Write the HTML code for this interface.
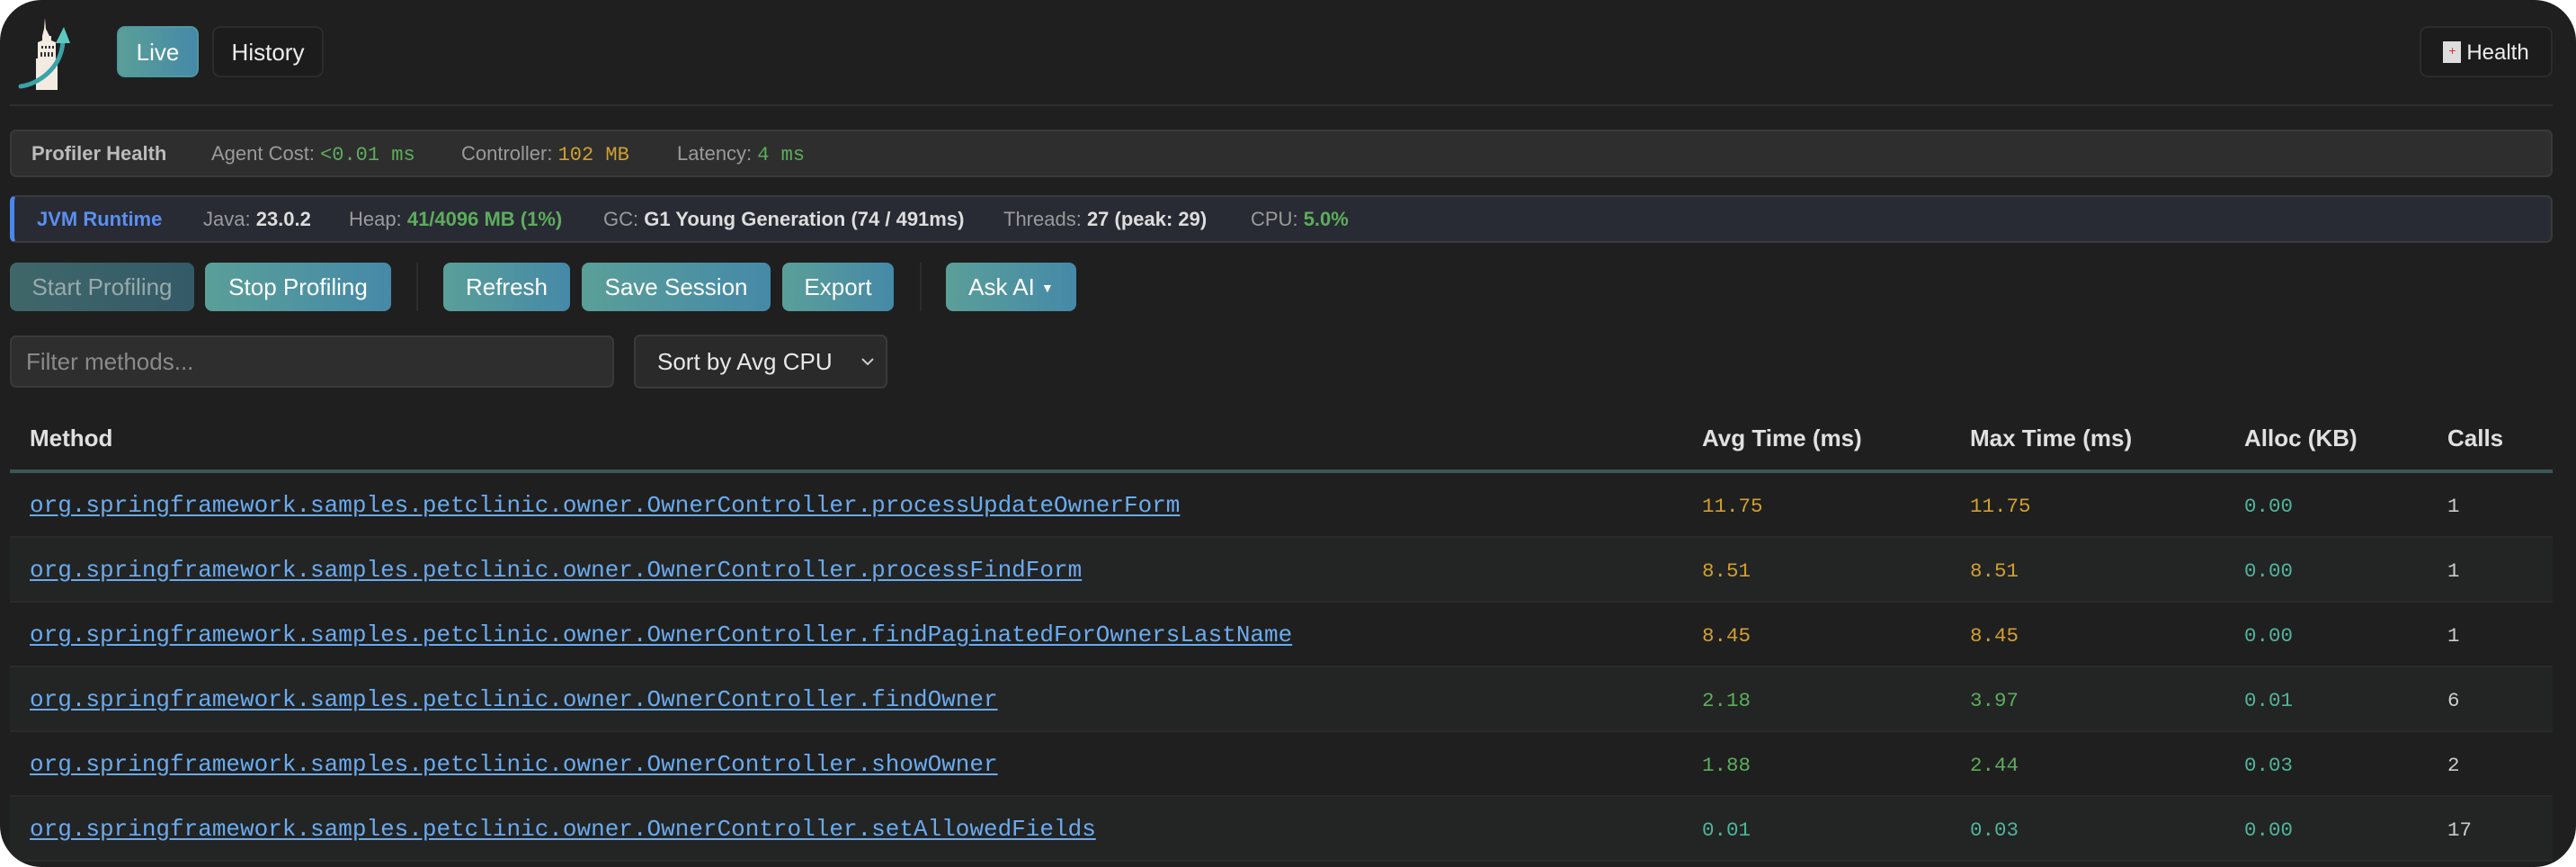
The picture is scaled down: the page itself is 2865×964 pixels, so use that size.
<!DOCTYPE html>
<html><head><meta charset="utf-8"><style>
*{box-sizing:border-box;margin:0;padding:0}
body{width:2865px;height:964px;background:#fff;overflow:hidden;font-family:"Liberation Sans",Arial,sans-serif}
#app{position:absolute;left:0;top:0;width:2865px;height:964px;background:#1f1f1f;border-radius:46px;overflow:hidden;color:#ddd}
.abs{position:absolute}
.tab{position:absolute;top:29px;height:57px;border-radius:9px;font-size:26px;line-height:55px;text-align:center;color:#eee;border:2px solid #2c2c2c}
.bar{position:absolute;left:11px;width:2828px;height:53px;border-radius:7px;border:2px solid #3a3a3a;font-size:22px;line-height:49px;color:#9a9a9a;white-space:nowrap}
.bar span{position:absolute;top:0}
.mono{font-family:"Liberation Mono",monospace}
.btn{position:absolute;top:292px;height:54px;border-radius:8px;background:linear-gradient(90deg,#5a9f98,#4589a8);color:#fff;font-size:26px;line-height:54px;text-align:center}
.sep{position:absolute;top:292px;width:2px;height:54px;background:#2c2c2c}
.hd{position:absolute;top:472px;font-size:26px;font-weight:bold;color:#e0e0e0}
.row{position:absolute;left:11px;width:2828px;height:72px;border-bottom:2px solid #2a2a2a}
.row a{position:absolute;left:22px;top:21px;font-family:"Liberation Mono",monospace;font-size:26px;color:#6aabf0;text-decoration:underline;text-underline-offset:3px}
.row i{position:absolute;top:24px;font-style:normal;font-family:"Liberation Mono",monospace;font-size:22.5px}
.o{color:#d0a030}.g{color:#5cad5c}.t{color:#4fb59a}.w{color:#ccc}
</style></head><body><div id="app">
<svg class="abs" style="left:18px;top:18px" width="62" height="86" viewBox="0 0 62 86">
<path d="M32 2 L33 14 L37 22 L39 22 L39 27 L44 29 L44 47 L46 47 L46 82 L22 82 L22 47 L24 47 L24 29 L29 27 L29 22 L31 14Z" fill="#f3ebe2"/>
<g fill="#333"><rect x="28" y="33" width="2" height="3"/><rect x="32" y="33" width="2" height="3"/><rect x="36" y="33" width="2" height="3"/><rect x="40" y="33" width="2" height="3"/><rect x="27" y="40" width="2" height="5"/><rect x="31" y="40" width="2" height="5"/><rect x="35" y="40" width="2" height="5"/><rect x="39" y="40" width="2" height="5"/></g>
<path d="M5 78 C22 76 50 60 52 28" stroke="#3aa3a8" stroke-width="5" fill="none" stroke-linecap="round"/>
<path d="M44 30 L53 12 L60 30Z" fill="#5cc8c0"/>
</svg>
<div class="tab" style="left:130px;width:91px;background:linear-gradient(90deg,#5a9f98,#4589a8);border-color:#4f97a0;color:#fff">Live</div>
<div class="tab" style="left:236px;width:124px;background:#1c1c1c">History</div>
<div class="tab" style="left:2691px;width:148px;background:#1c1c1c;font-size:24px"><span style="display:inline-block;width:20px;height:24px;background:#ddd;vertical-align:-4px;margin-right:6px;position:relative"><span style="position:absolute;left:6px;top:3px;color:#d33;font-size:14px;line-height:14px">+</span></span>Health</div>
<div class="abs" style="left:11px;top:116px;width:2828px;height:2px;background:#2e2e2e"></div>
<div class="bar" style="top:144px;background:#2e2e2e">
<span style="left:22px;font-weight:bold;color:#bbb">Profiler Health</span>
<span style="left:222px">Agent Cost: <b class="mono g" style="font-weight:normal">&lt;0.01 ms</b></span>
<span style="left:500px">Controller: <b class="mono o" style="font-weight:normal">102 MB</b></span>
<span style="left:740px">Latency: <b class="mono g" style="font-weight:normal">4 ms</b></span>
</div>
<div class="bar" style="top:217px;background:#282b33;border-left:5px solid #4a86ee">
<span style="left:25px;font-weight:bold;color:#5b8ff0">JVM Runtime</span>
<span style="left:210px">Java: <b style="color:#ddd">23.0.2</b></span>
<span style="left:372px">Heap: <b style="color:#5cad5c">41/4096 MB (1%)</b></span>
<span style="left:655px">GC: <b style="color:#ddd">G1 Young Generation (74 / 491ms)</b></span>
<span style="left:1100px">Threads: <b style="color:#ddd">27 (peak: 29)</b></span>
<span style="left:1375px">CPU: <b style="color:#5cad5c">5.0%</b></span>
</div>
<div class="btn" style="left:11px;width:205px;background:linear-gradient(90deg,#3f6769,#345a68);color:#9aa">Start Profiling</div>
<div class="btn" style="left:228px;width:207px">Stop Profiling</div>
<div class="sep" style="left:463px"></div>
<div class="btn" style="left:493px;width:141px">Refresh</div>
<div class="btn" style="left:647px;width:210px">Save Session</div>
<div class="btn" style="left:870px;width:124px">Export</div>
<div class="sep" style="left:1023px"></div>
<div class="btn" style="left:1052px;width:145px">Ask AI <span style="font-size:14px;vertical-align:3px">▼</span></div>
<div class="abs" style="left:11px;top:373px;width:672px;height:58px;background:#2e2e2e;border:2px solid #3a3a3a;border-radius:7px;font-size:26px;line-height:54px;padding-left:16px;color:#8a8a8a">Filter methods...</div>
<div class="abs" style="left:705px;top:372px;width:282px;height:60px;background:#2a2a2a;border:2px solid #3a3a3a;border-radius:7px;font-size:26px;line-height:56px;padding-left:24px;color:#e8e8e8">Sort by Avg CPU<svg style="position:absolute;right:12px;top:22px" width="16" height="12"><path d="M2 3 L8 9 L14 3" stroke="#ccc" stroke-width="2" fill="none"/></svg></div>
<div class="hd" style="left:33px">Method</div>
<div class="hd" style="left:1893px">Avg Time (ms)</div>
<div class="hd" style="left:2191px">Max Time (ms)</div>
<div class="hd" style="left:2496px">Alloc (KB)</div>
<div class="hd" style="left:2722px">Calls</div>
<div class="abs" style="left:11px;top:522px;width:2828px;height:4px;background:#3a5856"></div>
<div class="row" style="top:526px"><a>org.springframework.samples.petclinic.owner.OwnerController.processUpdateOwnerForm</a><i class="o" style="left:1882px">11.75</i><i class="o" style="left:2180px">11.75</i><i class="t" style="left:2485px">0.00</i><i class="w" style="left:2711px">1</i></div>
<div class="row" style="top:598px;background:#232424"><a>org.springframework.samples.petclinic.owner.OwnerController.processFindForm</a><i class="o" style="left:1882px">8.51</i><i class="o" style="left:2180px">8.51</i><i class="t" style="left:2485px">0.00</i><i class="w" style="left:2711px">1</i></div>
<div class="row" style="top:670px"><a>org.springframework.samples.petclinic.owner.OwnerController.findPaginatedForOwnersLastName</a><i class="o" style="left:1882px">8.45</i><i class="o" style="left:2180px">8.45</i><i class="t" style="left:2485px">0.00</i><i class="w" style="left:2711px">1</i></div>
<div class="row" style="top:742px;background:#232424"><a>org.springframework.samples.petclinic.owner.OwnerController.findOwner</a><i class="g" style="left:1882px">2.18</i><i class="g" style="left:2180px">3.97</i><i class="t" style="left:2485px">0.01</i><i class="w" style="left:2711px">6</i></div>
<div class="row" style="top:814px"><a>org.springframework.samples.petclinic.owner.OwnerController.showOwner</a><i class="g" style="left:1882px">1.88</i><i class="g" style="left:2180px">2.44</i><i class="t" style="left:2485px">0.03</i><i class="w" style="left:2711px">2</i></div>
<div class="row" style="top:886px;background:#232424"><a>org.springframework.samples.petclinic.owner.OwnerController.setAllowedFields</a><i class="t" style="left:1882px">0.01</i><i class="t" style="left:2180px">0.03</i><i class="t" style="left:2485px">0.00</i><i class="w" style="left:2711px">17</i></div>
</div></body></html>
